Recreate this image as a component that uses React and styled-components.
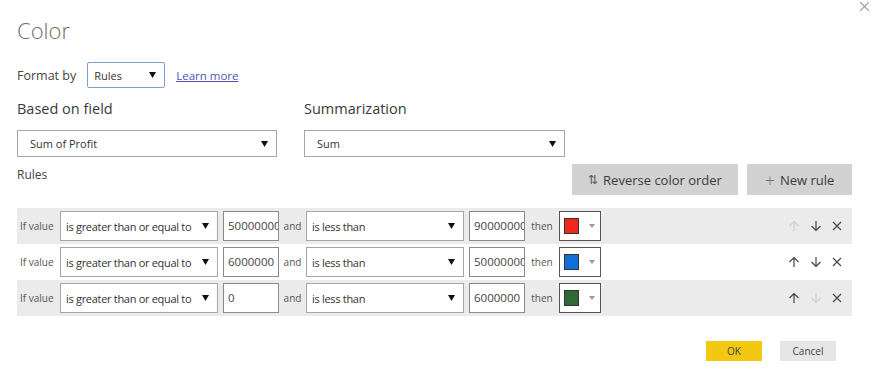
import React from 'react'
import styled, { createGlobalStyle } from 'styled-components'

const GlobalStyle = createGlobalStyle`
  html, body {
    margin: 0;
    padding: 0;
    background: #fff;
  }
  body {
    font-family: 'Open Sans', 'Noto Sans', 'Liberation Sans', sans-serif;
    color: #333;
  }
`

const rules = [
  { from: '50000000', to: '90000000', color: '#f0281c', upOff: true, shaded: true },
  { from: '6000000', to: '50000000', color: '#1170d8' },
  { from: '0', to: '6000000', color: '#2f6a35', downOff: true, shaded: true }
]

const Caret = () => (
  <svg width="7" height="6" viewBox="0 0 7 6">
    <path d="M0 0 L7 0 L3.5 6 Z" fill="#111" />
  </svg>
)

const UpArrow = ({ off }) => (
  <svg width="12" height="12" viewBox="0 0 12 12">
    <path
      d="M6 11 V1.5 M1.5 6 L6 1.5 L10.5 6"
      fill="none"
      stroke={off ? '#cfcfcf' : '#444'}
      strokeWidth="1.2"
    />
  </svg>
)

const DownArrow = ({ off }) => (
  <svg width="12" height="12" viewBox="0 0 12 12">
    <path
      d="M6 1 V10.5 M1.5 6 L6 10.5 L10.5 6"
      fill="none"
      stroke={off ? '#cfcfcf' : '#444'}
      strokeWidth="1.2"
    />
  </svg>
)

const Cross = ({ size = 10, color = '#444' }) => (
  <svg width={size} height={size} viewBox="0 0 10 10">
    <path d="M1 1 L9 9 M9 1 L1 9" stroke={color} strokeWidth="1.1" />
  </svg>
)

export default function App() {
  return (
    <Dialog>
      <GlobalStyle />
      <CloseButton>
        <Cross size={11} color="#9a9a9a" />
      </CloseButton>
      <Title>Color</Title>

      <FormatRow>
        <Label>Format by</Label>
        <Select width="78px" height="26px" focused>
          <span>Rules</span>
          <Caret />
        </Select>
        <LearnMore href="#">Learn more</LearnMore>
      </FormatRow>

      <FieldGrid>
        <Field>
          <Heading>Based on field</Heading>
          <Select height="27px" pad="12px">
            <span>Sum of Profit</span>
            <Caret />
          </Select>
        </Field>
        <Field>
          <Heading>Summarization</Heading>
          <Select height="27px" pad="12px">
            <span>Sum</span>
            <Caret />
          </Select>
        </Field>
      </FieldGrid>

      <RulesBar>
        <SmallLabel>Rules</SmallLabel>
        <ButtonGroup>
          <GrayButton width="166px">
            <Glyph>⇅</Glyph>Reverse color order
          </GrayButton>
          <GrayButton width="105px">
            <Plus>+</Plus>New rule
          </GrayButton>
        </ButtonGroup>
      </RulesBar>

      <RuleList>
        {rules.map((r, i) => (
          <RuleRow key={i} shaded={r.shaded}>
            <RowText width="40px">If value</RowText>
            <Select width="158px" height="30px" pad="5px" tight>
              <span>is greater than or equal to</span>
              <Caret />
            </Select>
            <NumBox>{r.from}</NumBox>
            <RowText width="27px" center>and</RowText>
            <Select width="158px" height="30px" pad="5px" tight>
              <span>is less than</span>
              <Caret />
            </Select>
            <NumBox>{r.to}</NumBox>
            <RowText width="34px" center>then</RowText>
            <ColorPicker>
              <Swatch color={r.color} />
              <svg width="6" height="4" viewBox="0 0 6 4">
                <path d="M0 0 L6 0 L3 4 Z" fill="#999" />
              </svg>
            </ColorPicker>
            <RowActions>
              <UpArrow off={r.upOff} />
              <DownArrow off={r.downOff} />
              <Cross />
            </RowActions>
          </RuleRow>
        ))}
      </RuleList>

      <Footer>
        <OkButton>OK</OkButton>
        <CancelButton>Cancel</CancelButton>
      </Footer>
    </Dialog>
  )
}

const Dialog = styled.div`
  position: relative;
  width: 875px;
  height: 372px;
  box-sizing: border-box;
  padding: 16px 23px 0 17px;
  overflow: hidden;
`

const CloseButton = styled.div`
  position: absolute;
  top: -5px;
  right: 5px;
`

const Title = styled.div`
  font-size: 22px;
  font-weight: 300;
  color: #707070;
  line-height: 28px;
`

const FormatRow = styled.div`
  display: flex;
  align-items: center;
  margin-top: 18px;
`

const Label = styled.span`
  font-size: 12.5px;
  color: #444;
  margin-right: 11px;
`

const Select = styled.div`
  display: flex;
  align-items: center;
  justify-content: space-between;
  flex-shrink: 0;
  box-sizing: border-box;
  width: ${p => p.width || '100%'};
  height: ${p => p.height};
  padding: 0 8px 0 ${p => p.pad || '6px'};
  background: #fff;
  border: 1px solid ${p => (p.focused ? '#7f9fca' : '#a6a6a6')};
  border-radius: ${p => (p.focused ? '2px' : '0')};
  font-size: 11px;
  letter-spacing: ${p => (p.tight ? '-0.3px' : '0')};
  color: #333;
  white-space: nowrap;
`

const LearnMore = styled.a`
  margin-left: 11px;
  font-size: 11.5px;
  color: #5050c0;
  text-decoration: underline;
`

const FieldGrid = styled.div`
  display: grid;
  grid-template-columns: 260px 261px;
  column-gap: 27px;
  margin-top: 10px;
`

const Field = styled.div`
  display: flex;
  flex-direction: column;
`

const Heading = styled.div`
  font-size: 14.5px;
  color: #3a3a3a;
  line-height: 22px;
  margin-bottom: 10px;
`

const RulesBar = styled.div`
  display: flex;
  justify-content: space-between;
  align-items: flex-start;
  margin-top: 7px;
`

const SmallLabel = styled.div`
  font-size: 12px;
  color: #444;
  margin-top: 2px;
`

const ButtonGroup = styled.div`
  display: flex;
  gap: 9px;
`

const GrayButton = styled.div`
  display: flex;
  align-items: center;
  justify-content: center;
  width: ${p => p.width};
  height: 31px;
  background: #d2d2d2;
  font-size: 13px;
  color: #3a3a3a;
`

const Glyph = styled.span`
  font-size: 12px;
  margin-right: 5px;
  color: #555;
`

const Plus = styled.span`
  font-size: 18px;
  font-weight: 300;
  margin-right: 5px;
  color: #777;
  line-height: 1;
`

const RuleList = styled.div`
  margin-top: 13px;
  display: flex;
  flex-direction: column;
`

const RuleRow = styled.div`
  display: flex;
  align-items: center;
  height: 36px;
  padding: 0 10px 0 3px;
  background: ${p => (p.shaded ? '#ebebeb' : '#fff')};
`

const RowText = styled.span`
  flex-shrink: 0;
  width: ${p => p.width};
  text-align: ${p => (p.center ? 'center' : 'left')};
  font-size: 10px;
  color: #555;
`

const NumBox = styled.div`
  flex-shrink: 0;
  box-sizing: border-box;
  width: 56px;
  height: 30px;
  margin-left: 5px;
  line-height: 28px;
  padding: 0 0 0 4px;
  background: #fff;
  border: 1px solid #8a8a8a;
  font-size: 11.5px;
  color: #444;
  white-space: nowrap;
  overflow: hidden;
`

const ColorPicker = styled.div`
  display: flex;
  align-items: center;
  gap: 10px;
  box-sizing: border-box;
  width: 42px;
  height: 30px;
  padding-left: 4px;
  background: #fff;
  border: 1px solid #555;
`

const Swatch = styled.div`
  width: 15px;
  height: 16px;
  box-sizing: border-box;
  background: ${p => p.color};
  border: 1px solid #333;
`

const RowActions = styled.div`
  margin-left: auto;
  display: flex;
  align-items: center;
  gap: 10px;
`

const Footer = styled.div`
  display: flex;
  justify-content: flex-end;
  gap: 18px;
  margin-top: 25px;
  padding-right: 16px;
`

const FooterButton = styled.div`
  width: 56px;
  height: 20px;
  display: flex;
  align-items: center;
  justify-content: center;
  font-size: 10px;
  color: #444;
`

const OkButton = styled(FooterButton)`
  background: #f2c811;
`

const CancelButton = styled(FooterButton)`
  background: #e6e6e6;
`
